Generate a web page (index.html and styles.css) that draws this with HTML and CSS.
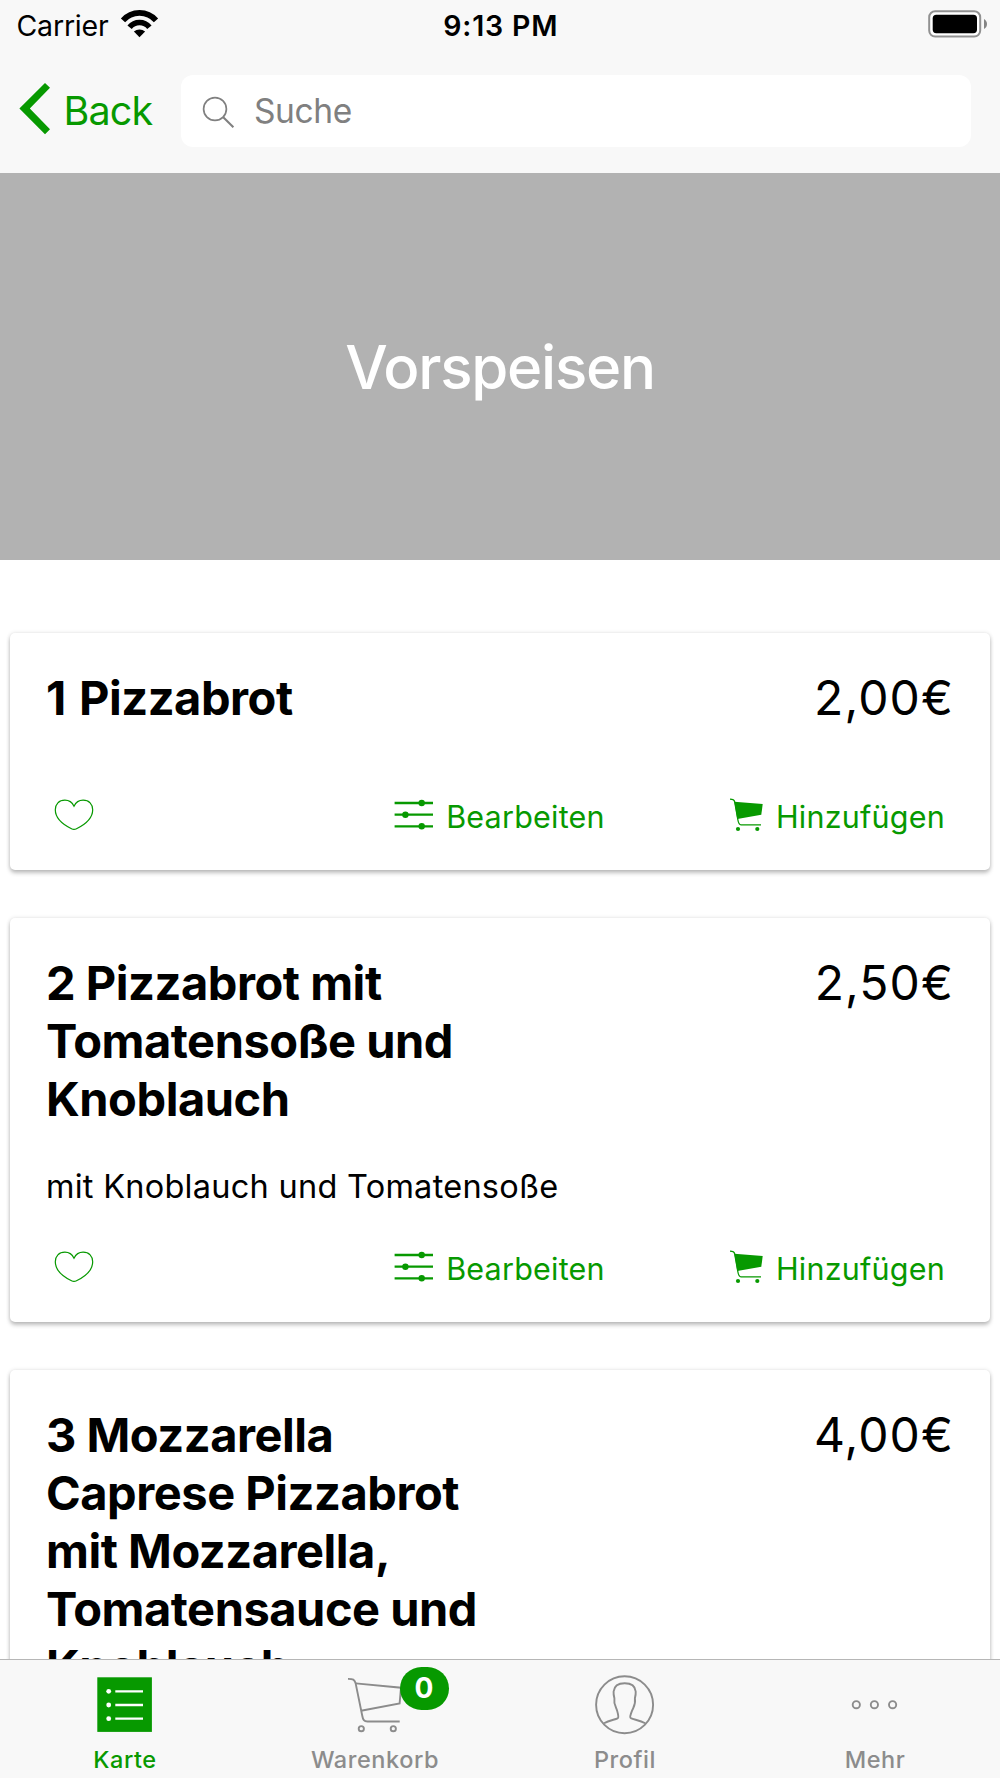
FILE: index.html
```
<!DOCTYPE html>
<html lang="de">
<head>
<meta charset="utf-8">
<title>Vorspeisen</title>
<link rel="stylesheet" href="styles.css">
</head>
<body>
<svg class="sprite" aria-hidden="true">
  <symbol id="heart" viewBox="0 0 40 40">
    <path d="M20 9.2C18 5 14.8 3.2 10.9 3.2C5 3.2 1.3 7 1.3 12.8C1.3 22 11 28.6 17.5 31.8Q20 33 22.5 31.8C29 28.6 38.7 22 38.7 12.8C38.7 7 35 3.2 29.1 3.2C25.2 3.2 22 5 20 9.2Z" fill="none" stroke="currentColor" stroke-width="1.2"/>
  </symbol>
  <symbol id="sliders" viewBox="0 0 39 40">
    <path d="M.6 6H39M.6 17.7H39M.6 29.3H39" stroke="currentColor" stroke-width="2.3"/>
    <g fill="currentColor"><circle cx="27.7" cy="6" r="3.2"/><circle cx="11.4" cy="17.7" r="3.2"/><circle cx="27.7" cy="29.3" r="3.2"/></g>
  </symbol>
  <symbol id="cart-full" viewBox="0 0 34 40">
    <path d="M4.3 4.7L32.7 7L31.3 17.7L7.3 22Z" fill="currentColor"/>
    <path d="M0 2.2C3 2.2 4.2 2.6 4.7 5L7.8 22.5C8.4 26 8.8 27.8 11 27.8H31" fill="none" stroke="currentColor" stroke-width="1.3"/>
    <g fill="currentColor"><circle cx="8" cy="32" r="2.1"/><circle cx="27.3" cy="32" r="2.1"/></g>
  </symbol>
</svg>

<div class="app">
  <header class="header">
    <div class="status">
      <div class="carrier">
        <span>Carrier</span>
        <svg class="wifi" viewBox="0 0 38 28">
          <g fill="none" stroke="#000" stroke-width="5.6">
            <path d="M2 10.4A21.8 21.8 0 0 1 35 10.4"/>
            <path d="M8.6 17.2A12.8 12.8 0 0 1 28.4 17.2"/>
          </g>
          <path d="M12.9 21.6A8.6 8.6 0 0 1 24.1 21.6L18.5 27.2Z"/>
        </svg>
      </div>
      <span class="clock">9:13 PM</span>
      <svg class="battery" viewBox="0 0 60 28">
        <rect x="1.2" y="1.2" width="51" height="25.4" rx="6" fill="#fff" stroke="#919191" stroke-width="2"/>
        <rect x="4.7" y="4.8" width="44.3" height="18.4" rx="3.6"/>
        <path d="M56 9C60 11 60 17 56 19Z" fill="#848484"/>
      </svg>
    </div>
    <nav class="nav">
      <a class="back">
        <svg class="chevron" viewBox="0 0 30 56"><path d="M25 0L30 4.8L9.8 25.6L30 46.3L25 51.3L-.6 25.6Z" fill="currentColor"/></svg>
        <span>Back</span>
      </a>
      <div class="search">
        <svg class="search-icon" viewBox="0 0 32 32"><g fill="none" stroke="currentColor" stroke-width="1.7"><circle cx="12" cy="14" r="11.4"/><path d="M20 22L30.4 32.2" stroke-width="2.1"/></g></svg>
        <span>Suche</span>
      </div>
    </nav>
  </header>

  <main class="content">
    <section class="hero"><h1>Vorspeisen</h1></section>
    <section class="list">
      <article class="card">
        <div class="card-head"><h2 class="short">1 Pizzabrot</h2><span class="price">2,00€</span></div>
        <div class="actions">
          <a><svg class="i-heart"><use href="#heart"/></svg></a>
          <a class="edit"><svg class="i-sliders"><use href="#sliders"/></svg><span>Bearbeiten</span></a>
          <a class="add"><svg class="i-cart"><use href="#cart-full"/></svg><span>Hinzufügen</span></a>
        </div>
      </article>
      <article class="card">
        <div class="card-head"><h2>2 Pizzabrot mit Tomatensoße und Knoblauch</h2><span class="price">2,50€</span></div>
        <p>mit Knoblauch und Tomatensoße</p>
        <div class="actions">
          <a><svg class="i-heart"><use href="#heart"/></svg></a>
          <a class="edit"><svg class="i-sliders"><use href="#sliders"/></svg><span>Bearbeiten</span></a>
          <a class="add"><svg class="i-cart"><use href="#cart-full"/></svg><span>Hinzufügen</span></a>
        </div>
      </article>
      <article class="card">
        <div class="card-head"><h2>3 Mozzarella Caprese Pizzabrot mit Mozzarella, Tomatensauce und Knoblauch</h2><span class="price">4,00€</span></div>
      </article>
    </section>
  </main>

  <footer class="tabs">
    <a class="tab active">
      <span class="icon"><svg viewBox="0 0 60 60">
        <rect x="2.3" y="2.3" width="54.6" height="54.6" fill="currentColor"/>
        <path d="M20.3 16.3H48M20.3 30H48M20.3 43.7H48" stroke="#fff" stroke-width="2.3"/>
        <g fill="#fff"><circle cx="13.7" cy="16.3" r="2.4"/><circle cx="13.7" cy="30" r="2.4"/><circle cx="13.7" cy="43.7" r="2.4"/></g>
      </svg></span>
      <span>Karte</span>
    </a>
    <a class="tab">
      <span class="icon"><svg viewBox="0 0 60 60"><g fill="none" stroke="currentColor" stroke-width="1.9">
        <path d="M3 3.9C8 3.9 9.6 4.2 10.7 8.6L17.2 40.5C18 45 19 46.5 22.5 46.5H54.7"/>
        <path d="M10.7 8.4L56 12.7L54.6 28.5L16 35.7"/>
        <circle cx="16.3" cy="53.7" r="2.6"/><circle cx="48.3" cy="53.7" r="2.6"/>
      </g></svg><b class="badge">0</b></span>
      <span>Warenkorb</span>
    </a>
    <a class="tab">
      <span class="icon"><svg viewBox="0 0 60 60"><g fill="none" stroke="currentColor" stroke-width="1.9">
        <circle cx="29.6" cy="29.7" r="28.5"/>
        <path d="M9 48.3C14 45.3 19.5 44.8 22.6 43.4C24.4 42.6 22 35 21.2 33.2C19.5 30 18.6 28 19.4 23.2C18.6 20 18.4 18.5 18.6 16.5C19.2 11.3 23.5 8.3 29.7 8.3C36 8.3 40.2 11.3 40.7 16.5C40.9 18.5 40.7 20 39.9 23.2C40.6 28 39.9 30 38.2 33.2C37.2 35 34 42.6 35.8 43.2C39.5 44.8 45 45.3 50.2 48.3"/>
      </g></svg></span>
      <span>Profil</span>
    </a>
    <a class="tab">
      <span class="icon"><svg viewBox="0 0 60 60"><g fill="none" stroke="currentColor" stroke-width="1.9">
        <circle cx="11.3" cy="29.7" r="3.6"/><circle cx="29.4" cy="29.7" r="3.6"/><circle cx="47.6" cy="29.7" r="3.6"/>
      </g></svg></span>
      <span>Mehr</span>
    </a>
  </footer>
</div>
</body>
</html>
```
FILE: styles.css
```
* { box-sizing: border-box; }
body { margin: 0; background: #fff; color: #000; font-family: Inter, "Liberation Sans", sans-serif; }
svg { display: block; flex: none; overflow: visible; }
h1, h2, p { margin: 0; }
.sprite { display: none; }

.app { display: flex; flex-direction: column; height: 1778px; overflow: hidden; }

.header { flex: none; height: 173px; background: #f8f8f8; }
.status { display: grid; grid-template-columns: 1fr auto 1fr; align-items: center; height: 51px; padding: 0 12px 0 16.5px; font-size: 28.5px; line-height: 34px; }
.carrier { display: flex; align-items: center; gap: 12px; letter-spacing: -.2px; }
.wifi { width: 38px; height: 28px; margin-bottom: 3px; }
.clock { padding-right: 3px; font-weight: 600; letter-spacing: .8px; }
.battery { justify-self: end; width: 60px; height: 28px; margin-bottom: 3px; }

.nav { display: flex; align-items: center; height: 120px; padding: 0 29px 0 20px; }
.back { display: flex; align-items: center; gap: 13.5px; width: 161px; color: #079900; font-size: 39.5px; line-height: 48px; letter-spacing: -.85px; }
.chevron { width: 30px; height: 56px; }
.search { display: flex; flex: 1; align-items: center; gap: 19px; height: 72px; padding-left: 22px; border-radius: 12px; background: #fff; color: #808080; font-size: 33.5px; line-height: 40px; letter-spacing: -.4px; }
.search-icon { width: 32px; height: 32px; }

.content { flex: 1; min-height: 0; overflow: hidden; }
.hero { display: flex; align-items: center; justify-content: center; height: 387px; background: #b2b2b2; color: #fff; }
.hero h1 { font-size: 60px; font-weight: 500; line-height: 74px; letter-spacing: -1.25px; }

.list { display: flex; flex-direction: column; gap: 48.4px; padding: 73px 10px; }
.card { display: flex; flex-direction: column; min-height: 237px; padding: 36px 36px 33px; border-radius: 5px; background: #fff; box-shadow: 0 3px 4px rgba(0, 0, 0, .24), 0 0 4px rgba(0, 0, 0, .12); }
.card-head { display: flex; justify-content: space-between; font-size: 47px; line-height: 58px; }
.card h2 { width: 450px; font-size: 47px; font-weight: 700; letter-spacing: -.47px; }
.card h2.short { word-spacing: 2.5px; }
.price { font-size: 48px; letter-spacing: 1.1px; }
.card p { margin-top: 39px; font-size: 32.5px; line-height: 40px; letter-spacing: .26px; }
.actions { display: grid; grid-template-columns: 1fr auto 1fr; margin-top: auto; padding: 0 9px 0 8px; color: #079900; font-size: 30.5px; line-height: 40px; letter-spacing: .23px; }
.card p + .actions { margin-top: 41.6px; }
.actions a { display: flex; }
.edit { gap: 13px; }
.add { gap: 11.5px; justify-content: flex-end; }
.i-heart { width: 40px; height: 40px; }
.i-sliders { width: 39px; height: 40px; }
.i-cart { width: 34px; height: 40px; }

.tabs { display: grid; grid-template-columns: repeat(4, 1fr); flex: none; height: 119px; border-top: 1px solid #b6b6b6; background: #f8f8f8; }
.tab { display: flex; flex-direction: column; align-items: center; gap: 11px; padding-top: 15px; color: #8c8c8c; font-size: 23.5px; font-weight: 500; line-height: 28px; letter-spacing: .55px; }
.tab.active { color: #079900; }
.icon { position: relative; width: 60px; height: 60px; }
.badge { position: absolute; top: -8.5px; left: 54.5px; width: 49px; height: 43.5px; border-radius: 22px; background: #079900; color: #fff; font-size: 28px; font-weight: 700; line-height: 43px; letter-spacing: 0; text-align: center; }
```
